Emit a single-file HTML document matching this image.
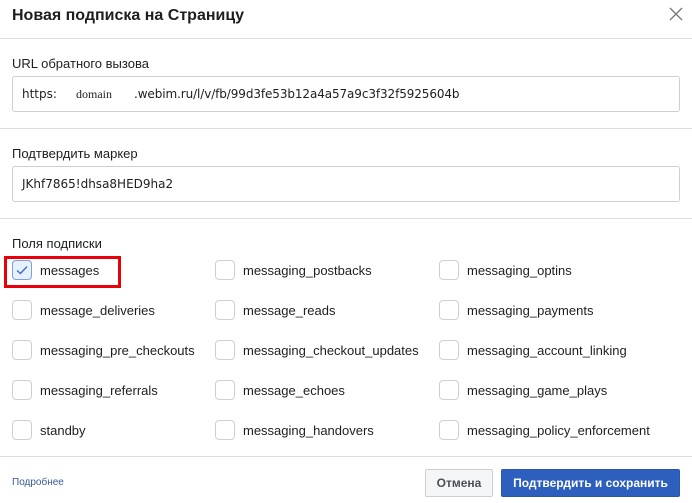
<!DOCTYPE html>
<html><head><meta charset="utf-8"><style>
*{box-sizing:border-box;margin:0;padding:0}
body{width:692px;height:503px;background:#fff;font-family:"Liberation Sans",sans-serif;color:#1c1e21;position:relative;overflow:hidden}
.a{position:absolute;white-space:nowrap}
.hr{position:absolute;left:0;width:692px;height:1px;background:#dadde1}
.inp{position:absolute;left:12px;width:668px;height:36px;border:1px solid #ccd0d5;border-radius:3px;font-family:"DejaVu Sans",sans-serif;font-size:12px;line-height:35px;padding-left:9px;color:#1c1e21}
.lbl{font-size:13px;color:#1c1e21}
.cb{position:absolute;width:20px;height:20px;border:1px solid #ccd0d5;border-radius:4px;background:#fff}
.t{position:absolute;font-size:13px;color:#1c1e21;white-space:nowrap}
</style></head><body>
<div class="a" style="left:12px;top:7px;font-size:16px;font-weight:bold">Новая подписка на Страницу</div>
<svg class="a" style="left:669px;top:7px" width="14" height="14" viewBox="0 0 14 14"><path d="M1 1L13 13M13 1L1 13" stroke="#777" stroke-width="1.3"/></svg>
<div class="hr" style="top:38px"></div>
<div class="a lbl" style="left:12px;top:56px">URL обратного вызова</div>
<div class="inp" style="top:76px"><span class="a" style="left:9px">https:</span><span class="a" style="left:63px;font-family:'Liberation Serif',serif">domain</span><span class="a" style="left:121px;letter-spacing:-0.1px">.webim.ru/l/v/fb/99d3fe53b12a4a57a9c3f32f5925604b</span></div>
<div class="hr" style="top:128px"></div>
<div class="a lbl" style="left:12px;top:146px">Подтвердить маркер</div>
<div class="inp" style="top:166px">JKhf7865!dhsa8HED9ha2</div>
<div class="hr" style="top:218px"></div>
<div class="a lbl" style="left:12px;top:236px">Поля подписки</div>
<div class="a" style="left:4px;top:256px;width:117px;height:32px;border:3px solid #e8000b"></div>
<div class="cb" style="left:12px;top:260px;border-color:#7da2e0;background:#e7f0fd"><svg width="18" height="18" viewBox="0 0 18 18" style="position:absolute;left:0;top:0"><path d="M4 9.5L7.5 12.5L14 5.5" fill="none" stroke="#3b6fd1" stroke-width="1.4"/></svg></div>
<div class="t" style="left:40px;top:263px">messages</div>
<div class="cb" style="left:215px;top:260px"></div><div class="t" style="left:243px;top:263px">messaging_postbacks</div>
<div class="cb" style="left:439px;top:260px"></div><div class="t" style="left:467px;top:263px">messaging_optins</div>
<div class="cb" style="left:12px;top:300px"></div><div class="t" style="left:40px;top:303px">message_deliveries</div>
<div class="cb" style="left:215px;top:300px"></div><div class="t" style="left:243px;top:303px">message_reads</div>
<div class="cb" style="left:439px;top:300px"></div><div class="t" style="left:467px;top:303px">messaging_payments</div>
<div class="cb" style="left:12px;top:340px"></div><div class="t" style="left:40px;top:343px">messaging_pre_checkouts</div>
<div class="cb" style="left:215px;top:340px"></div><div class="t" style="left:243px;top:343px">messaging_checkout_updates</div>
<div class="cb" style="left:439px;top:340px"></div><div class="t" style="left:467px;top:343px">messaging_account_linking</div>
<div class="cb" style="left:12px;top:380px"></div><div class="t" style="left:40px;top:383px">messaging_referrals</div>
<div class="cb" style="left:215px;top:380px"></div><div class="t" style="left:243px;top:383px">message_echoes</div>
<div class="cb" style="left:439px;top:380px"></div><div class="t" style="left:467px;top:383px">messaging_game_plays</div>
<div class="cb" style="left:12px;top:420px"></div><div class="t" style="left:40px;top:423px">standby</div>
<div class="cb" style="left:215px;top:420px"></div><div class="t" style="left:243px;top:423px">messaging_handovers</div>
<div class="cb" style="left:439px;top:420px"></div><div class="t" style="left:467px;top:423px">messaging_policy_enforcement</div>
<div class="hr" style="top:456px"></div>
<div class="a" style="left:12px;top:477px;font-size:10px;color:#385898">Подробнее</div>
<div class="a" style="left:425px;top:469px;width:68px;height:28px;background:#f5f6f7;border:1px solid #ccd0d5;border-radius:2px;font-size:12px;font-weight:bold;color:#4b4f56;text-align:center;line-height:26px">Отмена</div>
<div class="a" style="left:501px;top:469px;width:179px;height:28px;background:#2d5fbf;border:1px solid #2a56ab;border-radius:2px;font-size:12px;font-weight:bold;color:#fff;text-align:center;line-height:26px">Подтвердить и сохранить</div>
</body></html>
